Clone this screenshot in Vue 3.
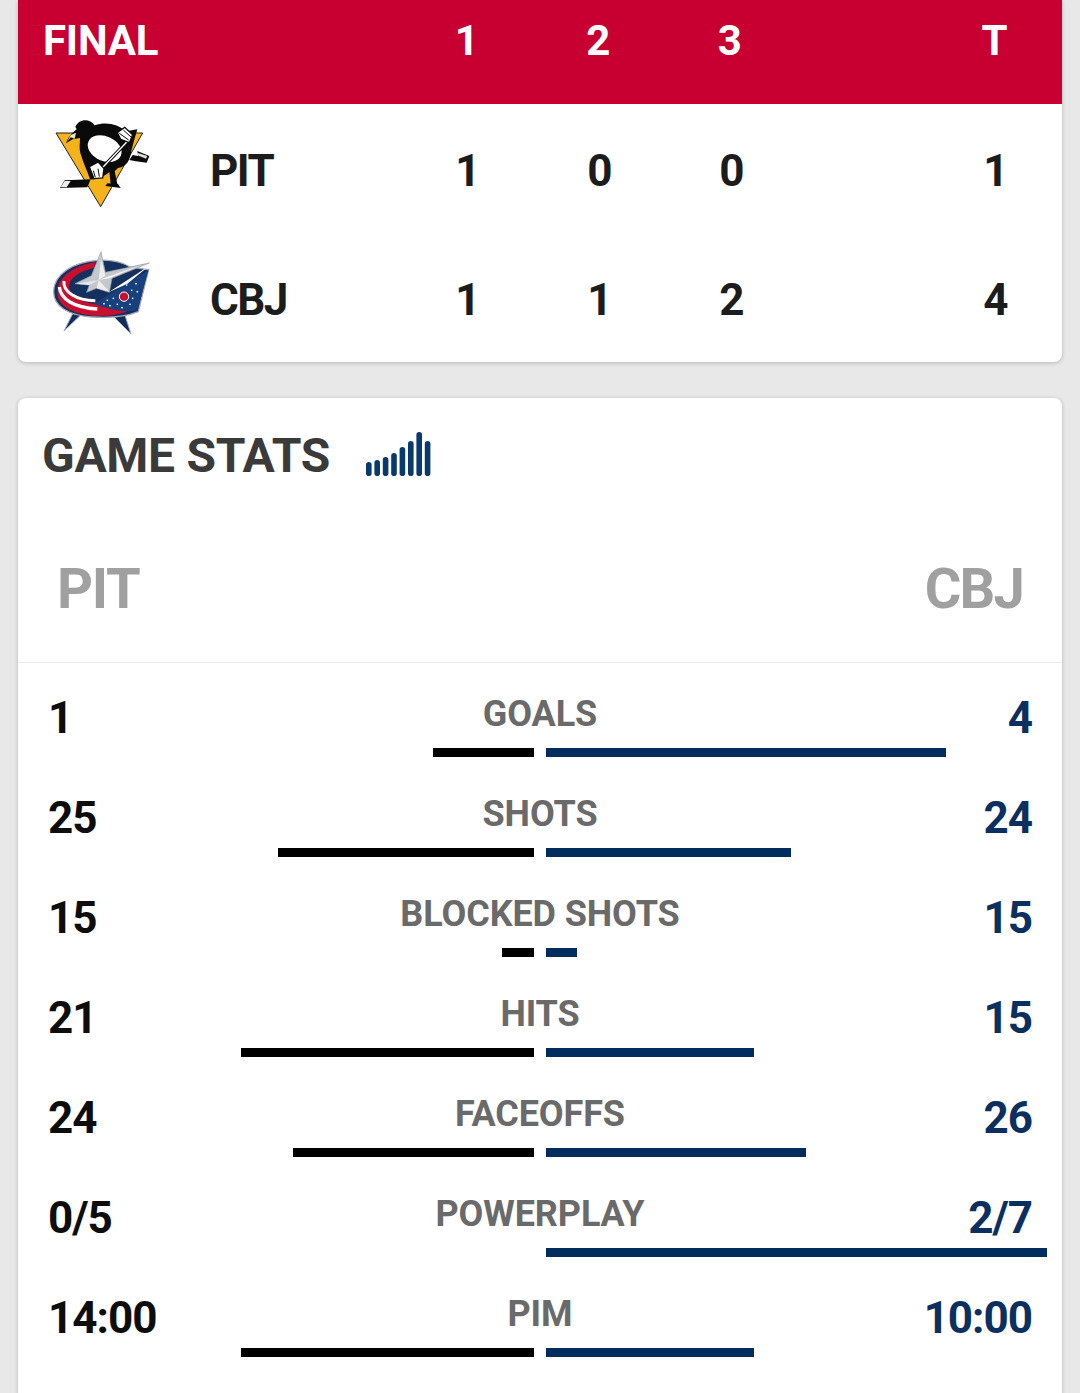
<script setup>
const periods = ['1', '2', '3']
const stats = [
  { label: 'GOALS', a: '1', b: '4', l: 101, r: 400 },
  { label: 'SHOTS', a: '25', b: '24', l: 256, r: 245 },
  { label: 'BLOCKED SHOTS', a: '15', b: '15', l: 32, r: 31 },
  { label: 'HITS', a: '21', b: '15', l: 293, r: 208 },
  { label: 'FACEOFFS', a: '24', b: '26', l: 241, r: 260 },
  { label: 'POWERPLAY', a: '0/5', b: '2/7', l: 0, r: 501 },
  { label: 'PIM', a: '14:00', b: '10:00', l: 293, r: 208 },
]
const signal = [14, 16, 19, 23, 29, 35, 44, 35]
const dots = [[232,196],[250,190],[262,208],[240,212],[300,208],[276,218],[318,146],[305,166],[322,170],[290,150],[308,190],[222,206]]
</script>

<template>
  <div class="page">
    <section class="card score">
      <div class="score-head">
        <div class="final">FINAL</div>
        <div class="pcols">
          <span v-for="p in periods" :key="p" class="pcell">{{ p }}</span>
        </div>
        <div class="total">T</div>
      </div>

      <div class="team">
        <svg class="logo" viewBox="0 12 420 387">
          <polygon points="78,99 338,99 212,320" fill="#f5b21a" stroke="#222" stroke-width="3" />
          <path d="M136,80 C148,56 178,54 194,76 C228,64 264,72 288,94 L322,88 L312,122 L304,152 C300,180 292,198 264,204 L254,214 L262,252 L242,252 L238,216 C222,228 205,240 180,238 C172,212 160,190 154,168 C146,148 150,130 150,114 L128,118 L108,130 C116,108 130,96 140,88 Z" fill="#0a0a0a" />
          <path d="M122,105 L138,98 L134,116 L122,112 L111,127 Z" fill="#e8e4d4" />
          <ellipse cx="224" cy="146" rx="53" ry="37" transform="rotate(24 224 146)" fill="#fff" />
          <path d="M205,216 L298,118" stroke="#0a0a0a" stroke-width="10" />
          <path d="M205,216 L298,118" stroke="#fff" stroke-width="4" />
          <path d="M90,264 L104,241 L182,238 L172,262 Z" fill="#0a0a0a" />
          <path d="M92,262 L104,243 L122,243 L110,262 Z" fill="#eee" />
          <path d="M262,98 L284,82 L308,104 L298,128 L272,118 Z" fill="#fff" stroke="#0a0a0a" stroke-width="4" />
          <path d="M268,100 L296,120 M280,90 L304,112" stroke="#0a0a0a" stroke-width="3" />
          <path d="M178,200 L205,186 L222,206 L218,234 L192,236 Z" fill="#fff" stroke="#0a0a0a" stroke-width="4" />
          <path d="M190,212 L196,232 M204,206 L208,230" stroke="#0a0a0a" stroke-width="3" />
          <path d="M298,180 L308,165 L324,168 L322,153 L358,168 L350,188 L318,184 Z" fill="#0a0a0a" />
          <path d="M322,158 L352,168 L348,176 L320,165 Z" fill="#ddd" />
          <path d="M226,258 L272,264 L264,252 L232,250 Z" fill="#0a0a0a" />
        </svg>
        <div class="abbr">PIT</div>
        <div class="pcols vals">
          <span class="pcell">1</span><span class="pcell">0</span><span class="pcell">0</span>
        </div>
        <div class="total val">1</div>
      </div>

      <div class="team">
        <svg class="logo" viewBox="0 -6 420 387">
          <polygon points="102,288 128,236 152,240" fill="#0f2d5c" stroke="#a6acb8" stroke-width="3" />
          <polygon points="303,297 248,242 282,232" fill="#0f2d5c" stroke="#a6acb8" stroke-width="3" />
          <path d="M71,170 C71,118 130,80 205,76 C240,74 275,80 300,96 L356,104 L325,230 C290,244 240,250 185,246 C115,240 71,215 71,170 Z" fill="#14305f" stroke="#a6acb8" stroke-width="4" />
          <path d="M196,82 C135,90 82,126 82,172 C82,214 130,238 190,242 C225,244 258,240 292,230 L196,206 C160,204 125,190 118,160 C114,138 135,112 192,98 Z" fill="#c8102e" />
          <path d="M88,156 C92,192 130,218 202,222" fill="none" stroke="#fff" stroke-width="10" />
          <path d="M102,138 C98,170 138,196 196,197" fill="none" stroke="#fff" stroke-width="9" />
          <path d="M192,206 L356,104 L322,226 C290,232 240,226 192,206 Z" fill="#17407c" />
          <path d="M236,172 L358,92 L292,146 Z" fill="#fff" />
          <path d="M246,112 L345,86 L262,128 Z" fill="#14305f" />
          <polygon points="213,50 226,112 358,84 246,130 238,172 200,160 170,172 178,150 135,146 184,122" fill="#c4c7cc" stroke="#9ca1aa" stroke-width="2" />
          <polygon points="213,70 226,122 206,135" fill="#eceded" />
          <polygon points="206,135 340,88 238,130" fill="#f6f6f6" />
          <polygon points="206,135 238,170 200,160" fill="#eceded" />
          <polygon points="206,135 138,146 178,150" fill="#e6e7ea" />
          <circle cx="282" cy="185" r="14" fill="#c8102e" stroke="#fff" stroke-width="3" />
          <circle v-for="(d, i) in dots" :key="i" :cx="d[0]" :cy="d[1]" r="2.5" fill="#fff" />
        </svg>
        <div class="abbr">CBJ</div>
        <div class="pcols vals">
          <span class="pcell">1</span><span class="pcell">1</span><span class="pcell">2</span>
        </div>
        <div class="total val">4</div>
      </div>
    </section>

    <section class="card stats">
      <div class="title-row">
        <h2 class="title">GAME STATS</h2>
        <svg class="signal" width="68" height="48" viewBox="0 0 68 48">
          <rect v-for="(h, i) in signal" :key="i" :x="1 + i * 8.4" :y="46 - h" width="5.6" :height="h" rx="2.8" fill="#0a3a6b" />
        </svg>
      </div>
      <div class="teams">
        <span>PIT</span>
        <span class="cbj">CBJ</span>
      </div>
      <div class="rows">
        <div v-for="s in stats" :key="s.label" class="row">
          <div class="row-top">
            <span class="a">{{ s.a }}</span>
            <span class="label">{{ s.label }}</span>
            <span class="b">{{ s.b }}</span>
          </div>
          <div class="bars">
            <div class="side left"><i class="bar black" :style="{ width: s.l + 'px' }"></i></div>
            <div class="side"><i class="bar navy" :style="{ width: s.r + 'px' }"></i></div>
          </div>
        </div>
      </div>
    </section>
  </div>
</template>

<style scoped>
.page {
  width: 1080px;
  height: 1393px;
  overflow: hidden;
  box-sizing: border-box;
  background: #e8e8e8;
  padding: 0 18px;
  font-family: Roboto, "Liberation Sans", sans-serif;
}
.card {
  background: #fff;
  box-shadow: 0 1px 4px rgba(0, 0, 0, 0.22);
}
.score {
  height: 362px;
  border-radius: 0 0 8px 8px;
  overflow: hidden;
}
.score-head {
  height: 104px;
  background: #c80032;
  color: #fff;
  display: flex;
  align-items: center;
  font-size: 42px;
  font-weight: 700;
  letter-spacing: -0.2px;
  line-height: 82px;
  padding-bottom: 22px;
  box-sizing: border-box;
}
.final {
  width: 380px;
  padding-left: 25px;
  box-sizing: border-box;
}
.pcols {
  display: flex;
  margin-left: 3px;
}
.pcell {
  width: 131.5px;
  text-align: center;
}
.total {
  margin-left: 174px;
  width: 50px;
  text-align: center;
}
.team {
  height: 129px;
  display: flex;
  align-items: center;
  color: #1c1c1c;
  font-size: 44px;
  font-weight: 700;
  letter-spacing: -1.5px;
  line-height: 48px;
}
.abbr, .vals, .val {
  position: relative;
  top: 2px;
}
.logo {
  width: 140px;
  height: 129px;
  margin-left: 12px;
  flex: none;
}
.abbr {
  width: 228px;
  padding-left: 40px;
  box-sizing: border-box;
}
.vals {
  margin-left: 3px;
}
.vals .pcell {
  width: 132px;
}
.val {
  margin-left: 173px;
}
.stats {
  margin-top: 36px;
  height: 1100px;
  border-radius: 8px 8px 0 0;
}
.title-row {
  height: 115px;
  display: flex;
  align-items: center;
  padding-left: 24px;
  box-sizing: border-box;
}
.title {
  margin: 0;
  font-size: 48px;
  font-weight: 700;
  letter-spacing: -0.3px;
  color: #3a3a3a;
}
.signal {
  margin-left: 35px;
  position: relative;
  top: -2px;
}
.teams {
  height: 150px;
  display: flex;
  justify-content: space-between;
  padding: 41px 39px 0 39px;
  box-sizing: border-box;
  border-bottom: 1px solid #ececec;
  color: #a0a0a0;
  font-size: 56px;
  font-weight: 700;
  letter-spacing: -1.3px;
  line-height: 70px;
}
.cbj {
  letter-spacing: -1.8px;
}
.rows {
  padding: 3px 15px 0;
}
.row {
  height: 100px;
  display: flex;
  flex-direction: column;
  justify-content: flex-end;
  padding-bottom: 9px;
  box-sizing: border-box;
}
.row-top {
  display: grid;
  grid-template-columns: 1fr auto 1fr;
  align-items: start;
  padding: 0 15px;
  height: 60px;
}
.a, .b {
  font-size: 44px;
  font-weight: 700;
  letter-spacing: -1px;
  line-height: 60px;
}
.a { color: #0d0d0d; }
.b { color: #0b2f5f; text-align: right; }
.label {
  font-size: 36px;
  font-weight: 700;
  letter-spacing: -0.1px;
  color: #6a6a6a;
  line-height: 52px;
}
.bars {
  display: grid;
  grid-template-columns: 1fr 1fr;
  gap: 12px;
}
.side {
  display: flex;
}
.side.left {
  justify-content: flex-end;
}
.bar {
  display: block;
  height: 9px;
}
.black { background: #000; }
.navy { background: #012d5e; }
</style>
<style>
html, body { margin: 0; background: #e8e8e8; }
</style>
